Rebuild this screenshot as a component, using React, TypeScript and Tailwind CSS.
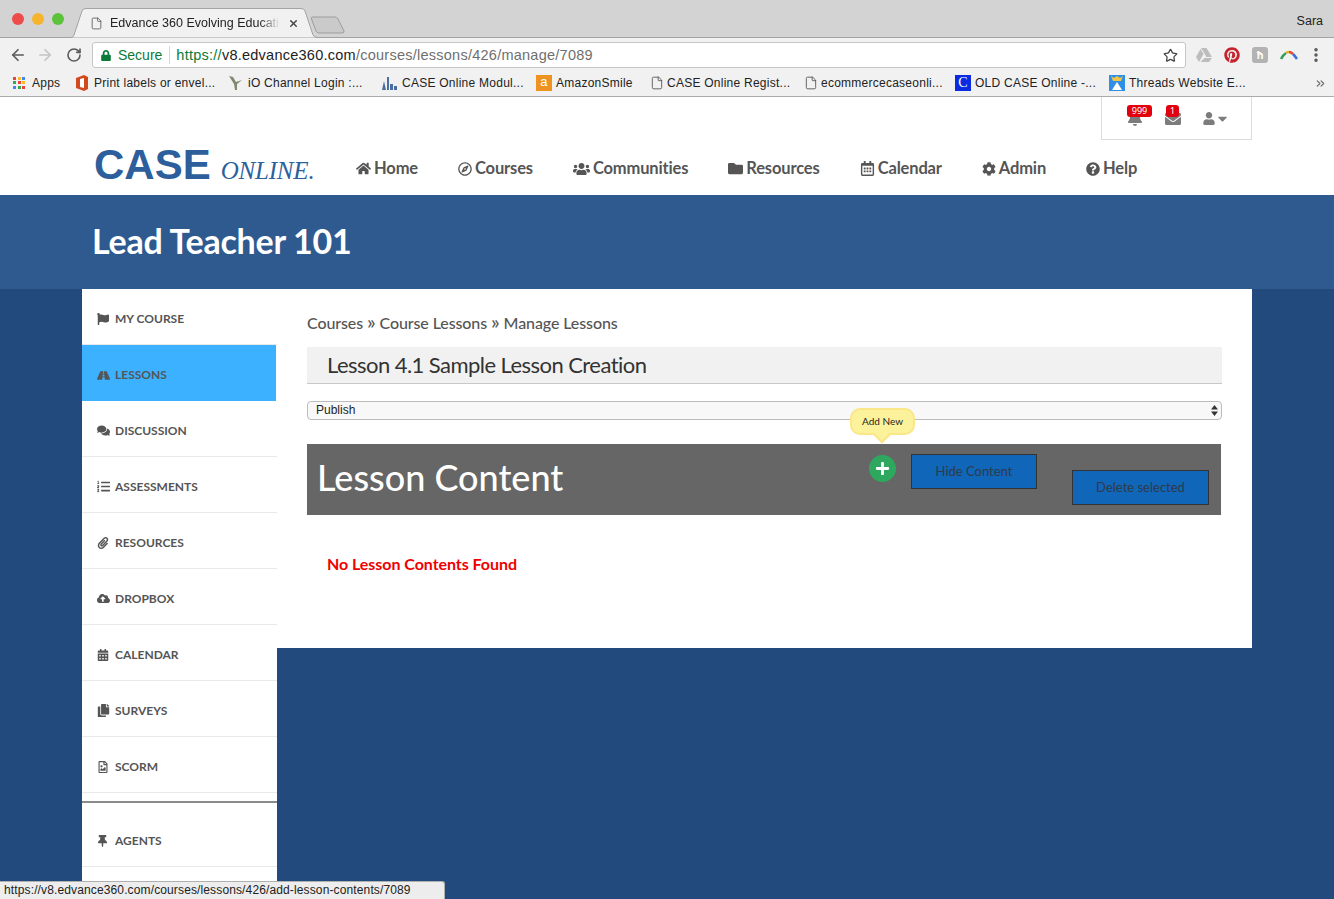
import { ArrowLeft, ArrowRight, RotateCw, Star, EllipsisVertical, File, ChevronsRight, X } from 'lucide-react';
import {
  FaHome, FaRegCompass, FaUsers, FaFolder, FaRegCalendarAlt, FaCog, FaQuestionCircle,
  FaFlag, FaRoad, FaComments, FaListOl, FaPaperclip, FaCloudUploadAlt, FaCalendarAlt,
  FaCopy, FaRegFileImage, FaThumbtack, FaBell, FaEnvelope, FaUser, FaCaretDown, FaLock,
  FaPinterest, FaPlus,
} from 'react-icons/fa';

const chromeFont = "font-['Liberation_Sans',Arial,sans-serif]";

const navItems = [
  { label: 'Home', icon: <FaHome className="w-[15px] h-[15px]" /> },
  { label: 'Courses', icon: <FaRegCompass className="w-[14px] h-[14px]" /> },
  { label: 'Communities', icon: <FaUsers className="w-[17px] h-[18px]" /> },
  { label: 'Resources', icon: <FaFolder className="w-[15px] h-[15px]" /> },
  { label: 'Calendar', icon: <FaRegCalendarAlt className="w-[15px] h-[15px]" /> },
  { label: 'Admin', icon: <FaCog className="w-[14px] h-[14px]" /> },
  { label: 'Help', icon: <FaQuestionCircle className="w-[14px] h-[14px]" /> },
];

const sideItems = [
  { label: 'My Course', icon: <FaFlag className="w-[12px] h-[12px]" /> },
  { label: 'Lessons', icon: <FaRoad className="w-[13px] h-[13px]" />, active: true },
  { label: 'Discussion', icon: <FaComments className="w-[13px] h-[13px]" /> },
  { label: 'Assessments', icon: <FaListOl className="w-[13px] h-[13px]" /> },
  { label: 'Resources', icon: <FaPaperclip className="w-[12px] h-[12px]" /> },
  { label: 'Dropbox', icon: <FaCloudUploadAlt className="w-[13px] h-[13px]" /> },
  { label: 'Calendar', icon: <FaCalendarAlt className="w-[12px] h-[12px]" /> },
  { label: 'Surveys', icon: <FaCopy className="w-[13px] h-[13px]" /> },
  { label: 'Scorm', icon: <FaRegFileImage className="w-[12px] h-[12px]" /> },
];

function AppsIcon() {
  const colors = ['bg-[#e8453c]', 'bg-[#f9bb2d]', 'bg-[#4285f4]', 'bg-[#34a853]', 'bg-[#e8453c]', 'bg-[#f9bb2d]', 'bg-[#4285f4]', 'bg-[#34a853]', 'bg-[#e8453c]'];
  return (
    <div className="grid grid-cols-3 gap-[1px] w-[13px] h-[13px]">
      {colors.map((c, i) => (
        <span key={i} className={`${c} w-[3px] h-[3px]`} />
      ))}
    </div>
  );
}

function Bookmarks() {
  const doc = <File className="w-[14px] h-[14px] text-[#555]" strokeWidth={1.5} />;
  return (
    <div className={`${chromeFont} flex items-center h-[27px] bg-[#f1f1f1] border-b border-[#ababab] text-[12px] text-[#222] tracking-[0.25px] pl-[13px] relative`}>
      <div className="w-[62px] flex items-center gap-[6px]"><AppsIcon /><span>Apps</span></div>
      <div className="w-[153px] flex items-center gap-[5px]">
        <svg viewBox="0 0 14 16" className="w-[14px] h-[16px]"><path d="M1 3 L9 0 L13 2 V14 L9 16 L1 13 Z" fill="#d2491e" /><path d="M5 4 L9 3 V13 L5 12 Z" fill="#fff" /></svg>
        <span>Print labels or envel...</span>
      </div>
      <div className="w-[153px] flex items-center gap-[5px]">
        <svg viewBox="0 0 15 16" className="w-[15px] h-[16px]"><path d="M1 1 L6 9 L7 15 H9 L9 9 L14 5 L8 7 L5 2 Z" fill="#7d8a70" /></svg>
        <span>iO Channel Login :...</span>
      </div>
      <div className="w-[155px] flex items-center gap-[4px]">
        <svg viewBox="0 0 17 16" className="w-[17px] h-[16px]"><path d="M1 15 L3 6 L5 15 Z M6 15 V2 H8 V15 Z M9 15 V9 H12 V15 Z M13 15 V11 H16 V15 Z" fill="#4a6f9f" /></svg>
        <span>CASE Online Modul...</span>
      </div>
      <div className="w-[114px] flex items-center gap-[4px]">
        <span className="w-[16px] h-[16px] bg-[#ee9322] text-white text-[13px] leading-[14px] text-center">a</span>
        <span>AmazonSmile</span>
      </div>
      <div className="w-[154px] flex items-center gap-[3px]">{doc}<span>CASE Online Regist...</span></div>
      <div className="w-[151px] flex items-center gap-[3px]">{doc}<span>ecommercecaseonli...</span></div>
      <div className="w-[154px] flex items-center gap-[4px]">
        <span className="w-[16px] h-[16px] bg-[#0a2be0] text-white text-[14px] leading-[15px] text-center font-['Liberation_Serif',serif]">C</span>
        <span>OLD CASE Online -...</span>
      </div>
      <div className="flex items-center gap-[4px]">
        <svg viewBox="0 0 16 16" className="w-[16px] h-[16px]"><rect width="16" height="16" fill="#2f8fe6" /><path d="M2 1 L5 3 L8 1 L11 3 L14 1 L12 6 H4 Z" fill="#f6c445" /><path d="M3 15 L8 7 L13 15 Z" fill="#fff" /></svg>
        <span>Threads Website E...</span>
      </div>
      <ChevronsRight className="absolute right-[7px] top-[7px] w-[13px] h-[13px] text-[#666]" />
    </div>
  );
}

function BrowserChrome() {
  return (
    <div className={chromeFont}>
      <div className="relative flex h-[38px] bg-[#d3d3d3] border-b border-[#a3a3a3]">
        <div className="flex items-center gap-[8px] pl-[12px] h-[37px]">
          <span className="w-[12px] h-[12px] rounded-full bg-[#ee4b4b]" />
          <span className="w-[12px] h-[12px] rounded-full bg-[#f6b42c]" />
          <span className="w-[12px] h-[12px] rounded-full bg-[#5cc23c]" />
        </div>
        <svg viewBox="0 0 248 30" className="absolute left-[70px] top-[8px] w-[248px] h-[30px]">
          <path d="M0 29.5 H1 Q3 29.5 4 27 L12 3 Q13 0.5 16 0.5 H231 Q234 0.5 235 3 L243 27 Q244 29.5 248 29.5" fill="#f1f1f1" stroke="#a3a3a3" />
        </svg>
        <svg viewBox="0 0 34 18" className="absolute left-[311px] top-[16px] w-[34px] h-[18px]">
          <path d="M1 1 H24 Q26 1 27 3 L33 15 Q33.5 17 31 17 H8 Q6 17 5 15 L0.5 3 Q0 1 1 1 Z" fill="#cacaca" stroke="#9c9c9c" />
        </svg>
        <div className="absolute left-[90px] top-[15px] h-[16px] flex items-center">
          <File className="w-[13px] h-[15px] text-[#555]" strokeWidth={1.5} />
          <span className="ml-[7px] w-[170px] whitespace-nowrap text-[12.5px] text-[#222] [mask-image:linear-gradient(to_right,black_88%,transparent)]">Edvance 360 Evolving Educati</span>
          <X className="ml-[8px] w-[11px] h-[11px] text-[#444]" strokeWidth={3} />
        </div>
        <span className="absolute right-[11px] top-[12px] text-[12.5px] text-[#222]">Sara</span>
      </div>

      <div className="flex items-center h-[32px] pt-[2px] bg-[#f1f1f1] relative">
        <div className="flex items-center w-[92px] pl-[9px] gap-[9px]">
          <ArrowLeft className="w-[18px] h-[18px] text-[#5a5a5a]" strokeWidth={2.2} />
          <ArrowRight className="mr-[3px] w-[18px] h-[18px] text-[#c4c4c4]" strokeWidth={2.2} />
          <RotateCw className="w-[16px] h-[16px] text-[#5a5a5a]" strokeWidth={2.4} />
        </div>
        <div className="flex items-center w-[1094px] h-[26px] bg-white border border-[#c6c6c6] rounded-[3px]">
          <FaLock className="ml-[8px] w-[10px] h-[11px] text-[#0b7a38]" />
          <span className="ml-[7px] text-[14px] text-[#0b7a38]">Secure</span>
          <span className="ml-[7px] w-px h-[18px] bg-[#d6d6d6]" />
          <span className="ml-[6px] pt-[2px] text-[14.5px] tracking-[0.25px] whitespace-nowrap">
            <span className="text-[#0b7a38]">https://</span>
            <span className="text-[#222]">v8.edvance360.com</span>
            <span className="text-[#6f6f6f]">/courses/lessons/426/manage/7089</span>
          </span>
          <Star className="ml-auto mr-[7px] w-[15px] h-[15px] text-[#444]" strokeWidth={2} />
        </div>
        <div className="flex items-center">
          <svg viewBox="0 0 16 14" className="ml-[10px] w-[16px] h-[14px]"><path d="M5 0 H10.5 L16 9 H10.5 Z M4.5 1 L7.5 6 L3 14 L0 9 Z M8.5 10 H16 L13 14 H4.5 Z" fill="#bdbdbd" /></svg>
          <FaPinterest className="ml-[12px] w-[16px] h-[16px] text-[#c8232c]" />
          <span className="ml-[12px] w-[16px] h-[16px] rounded-[3px] bg-[#b3b3b3] text-white text-[11px] leading-[16px] text-center font-bold">ћ</span>
          <svg viewBox="0 0 18 10" className="ml-[12px] w-[18px] h-[10px]">
            <path d="M1 9 Q3 5 6 3" fill="none" stroke="#2f9e57" strokeWidth="2.5" />
            <path d="M6 3 Q7.5 2 9 2" fill="none" stroke="#e8b32e" strokeWidth="2.5" />
            <path d="M9 2 Q11 2 13 4" fill="none" stroke="#e0483e" strokeWidth="2.5" />
            <path d="M13 4 Q15 6 17 9" fill="none" stroke="#3b6fd8" strokeWidth="2.5" />
          </svg>
          <EllipsisVertical className="ml-[9px] w-[18px] h-[18px] text-[#555]" strokeWidth={2.6} />
        </div>
      </div>

      <Bookmarks />
    </div>
  );
}

function Header() {
  return (
    <div className="bg-white h-[98px]">
      <div className="flex justify-end pr-[82px]">
        <div className="relative w-[151px] h-[43px] border border-t-0 border-[#dcdcdc] text-[#7c7c7c]">
          <FaBell className="absolute left-[26px] top-[13px] w-[14px] h-[16px]" />
          <span className="absolute left-[25px] top-[8px] w-[25px] h-[12px] rounded-[3px] bg-[#e2000f] text-white text-[9px] leading-[12px] text-center">999</span>
          <FaEnvelope className="absolute left-[63px] top-[14px] w-[16px] h-[16px]" />
          <span className="absolute left-[64px] top-[8px] w-[13px] h-[12px] rounded-[3px] bg-[#e2000f] text-white text-[9px] leading-[12px] text-center">1</span>
          <FaUser className="absolute left-[101px] top-[15px] w-[12px] h-[13px]" />
          <FaCaretDown className="absolute left-[113px] top-[14px] w-[15px] h-[15px]" />
        </div>
      </div>
      <div className="flex items-center pl-[94px] h-[55px]">
        <div className="w-[262px] -mt-[6px] flex items-baseline whitespace-nowrap text-[#2d5f9c]">
          <span className="font-['Liberation_Sans',sans-serif] font-bold text-[42px] leading-[46px]">CASE</span>
          <span className="ml-[10px] font-['Liberation_Serif',serif] italic text-[25px] leading-[30px] tracking-[-0.2px]">ONLINE.</span>
        </div>
        <div className="flex items-center gap-[40px] pt-[2px] font-['Lato',sans-serif] font-bold text-[16.5px] text-[#555] tracking-[-0.15px]">
          {navItems.map((n) => (
            <div key={n.label} className="flex items-center gap-[3px]">
              {n.icon}
              <span>{n.label}</span>
            </div>
          ))}
        </div>
      </div>
    </div>
  );
}

function Sidebar() {
  return (
    <div className="w-[195px] h-[610px] bg-white shrink-0 font-['Lato',sans-serif] font-bold text-[12px] uppercase text-[#555]">
      {sideItems.map((s) => (
        <div
          key={s.label}
          className={s.active
            ? 'flex items-center h-[56px] w-[194px] bg-[#3bb1ff] pl-[15px] pt-[4px]'
            : 'flex items-center h-[56px] border-b border-[#e9e9e9] pl-[15px] pt-[4px]'}
        >
          <span className="w-[18px] flex">{s.icon}</span>
          <span>{s.label}</span>
        </div>
      ))}
      <div className="mt-[8px] border-t-2 border-[#8a8a8a]" />
      <div className="mt-[8px] flex items-center h-[56px] border-b border-[#e9e9e9] pl-[15px] pt-[4px]">
        <span className="w-[18px] flex"><FaThumbtack className="w-[11px] h-[12px]" /></span>
        <span>Agents</span>
      </div>
    </div>
  );
}

function Main() {
  return (
    <div className="w-[975px] h-[359px] bg-white px-[30px] font-['Lato',sans-serif]">
      <div className="pt-[22px] h-[44px] text-[16px] leading-[20px] font-medium text-[#555] tracking-[-0.1px] whitespace-nowrap">
        Courses <span className="text-[20px]">»</span> Course Lessons <span className="text-[20px]">»</span> Manage Lessons
      </div>
      <div className="mt-[14px] h-[37px] bg-[#f1f1f1] border-b border-[#c8c8c8] pl-[20px] text-[22px] leading-[36px] text-[#333] tracking-[-0.55px]">Lesson 4.1 Sample Lesson Creation</div>
      <div className="relative mt-[17px] h-[19px]">
        <select className={`${chromeFont} appearance-none w-full h-[19px] pl-[8px] py-0 leading-[15px] bg-[#f8f8f8] border border-[#bcbcbc] rounded-[4px] text-[12px] text-[#222] block`}>
          <option>Publish</option>
        </select>
        <svg viewBox="0 0 7 11" className="absolute right-[4px] top-[4px] w-[7px] h-[11px]">
          <path d="M3.5 0 L7 4.5 H0 Z M0 6.5 H7 L3.5 11 Z" fill="#333" />
        </svg>
      </div>
      <div className="mt-[24px] w-[914px] h-[71px] bg-[#666] flex relative">
        <div className="pl-[10px] text-[36px] leading-[67px] text-white font-medium">Lesson Content</div>
        <div className="absolute left-[543px] -top-[36px] w-[65px] h-[27px] rounded-[10px] bg-[#fdf29c] border-2 border-[#fbe688] text-[10px] leading-[22px] text-center text-[#222]">
          Add New
          <span className="absolute left-[24px] top-[19px] w-[12px] h-[12px] rotate-45 bg-[#fdf29c] border-b-2 border-r-2 border-[#fbe688]" />
        </div>
        <div className="ml-auto flex items-start text-[13px] text-[#2f3a4a]">
          <span className="mt-[11px] w-[27px] h-[27px] rounded-full bg-[#2fa85f] flex items-center justify-center">
            <FaPlus className="w-[15px] h-[15px] text-white" />
          </span>
          <div className="ml-[15px] mt-[10px] w-[126px] h-[35px] bg-[#1066b8] border border-[#333] flex items-center justify-center">Hide Content</div>
          <div className="ml-[35px] mr-[12px] mt-[26px] w-[137px] h-[35px] bg-[#1066b8] border border-[#333] flex items-center justify-center">Delete selected</div>
        </div>
      </div>
      <div className="mt-[39px] pl-[20px] text-[16px] leading-[20px] font-bold text-[#f00000] tracking-[-0.05px]">No Lesson Contents Found</div>
    </div>
  );
}

export default function App() {
  return (
    <div className="relative h-[899px] overflow-hidden bg-[#224a7c]">
      <BrowserChrome />
      <Header />
      <div className="h-[94px] bg-[#2e5a8f] pl-[92px] font-['Lato',sans-serif] font-bold text-[34px] tracking-[-0.25px] leading-[92px] text-white">Lead Teacher 101</div>
      <div className="flex pl-[82px]">
        <Sidebar />
        <Main />
      </div>
      <div className={`${chromeFont} absolute left-0 bottom-0 w-[445px] h-[18px] pl-[4px] bg-[#ededed] border-t border-r border-[#b0b0b0] rounded-tr-[3px] text-[12px] leading-[17px] text-[#222] tracking-[0.13px]`}>
        https://v8.edvance360.com/courses/lessons/426/add-lesson-contents/7089
      </div>
    </div>
  );
}
